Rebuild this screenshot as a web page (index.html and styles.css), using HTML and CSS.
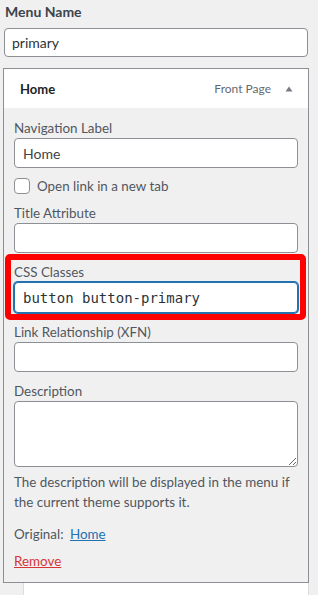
FILE: index.html
```html
<!DOCTYPE html>
<html>
<head>
<meta charset="utf-8">
<link rel="stylesheet" href="styles.css">
</head>
<body>
<div class="page">
  <label class="menu-name-label">Menu Name</label>
  <input class="text-input menu-name" type="text" value="primary">
  <div class="item">
    <div class="item-head">
      <span class="item-title">Home</span>
      <span class="item-type">Front Page</span>
      <svg class="toggle" width="8" height="6" viewBox="0 0 8 6"><path d="M4 0.5 L7.5 5.5 L0.5 5.5 Z" fill="#787c82"/></svg>
    </div>
    <div class="item-body">
      <div class="field">
        <label class="field-label">Navigation Label</label>
        <input class="text-input" type="text" value="Home">
      </div>
      <div class="field check-row">
        <span class="checkbox"></span>
        <span class="check-text">Open link in a new tab</span>
      </div>
      <div class="field">
        <label class="field-label">Title Attribute</label>
        <input class="text-input" type="text" value="">
      </div>
      <div class="field highlighted">
        <label class="field-label">CSS Classes</label>
        <input class="text-input mono focused" type="text" value="button button-primary">
      </div>
      <div class="field">
        <label class="field-label">Link Relationship (XFN)</label>
        <input class="text-input" type="text" value="">
      </div>
      <div class="field desc">
        <label class="field-label">Description</label>
        <textarea class="textarea"></textarea>
        <p class="help">The description will be displayed in the menu if the current theme supports it.</p>
      </div>
      <p class="original">Original: <a href="#" class="link">Home</a></p>
      <p class="remove-row"><a href="#" class="remove">Remove</a></p>
    </div>
  </div>
  <div class="next-item"></div>
</div>
</body>
</html>
```
FILE: styles.css
```css
* { box-sizing: border-box; }
html, body { margin: 0; padding: 0; background: #f0f0f1; }
body {
  font-family: Lato, "Noto Sans", sans-serif;
  font-size: 13.4px;
  color: #50575e;
  width: 318px;
  height: 595px;
  overflow: hidden;
}
.page { padding: 3px 9px 0 3px; }
.menu-name-label {
  display: block;
  font-weight: 700;
  font-size: 14px;
  line-height: 18px;
  color: #3c434a;
  padding-left: 2px;
}
.text-input {
  display: block;
  width: 100%;
  height: 30px;
  border: 1px solid #8c8f94;
  border-radius: 4px;
  background: #fff;
  font-family: inherit;
  font-size: 14px;
  color: #3c434a;
  padding: 0 8px;
  margin: 0;
  outline: none;
}
.menu-name { margin: 7px 0 0 1px; width: 304px; height: 29px; padding: 0 7px; color: #2c3338; }
.item {
  margin-top: 11px;
  border: 1px solid #8c8f94;
  background: #f0f0f1;
  width: 306px;
}
.item-head {
  height: 39px;
  background: #fff;
  display: flex;
  align-items: center;
  padding: 0 15px 0 16px;
}
.item-title { font-weight: 700; color: #1d2327; font-size: 13px; flex: 1; }
.item-type { color: #646970; font-size: 12px; margin-right: 14px; }
.toggle { display: block; }
.item-body { padding: 11px 10px 11px 10px; }
.field { margin-bottom: 10px; position: relative; }
.field-label { display: block; line-height: 18px; margin-bottom: 1px; }
.check-row { display: flex; align-items: center; height: 16px; }
.checkbox {
  width: 16px; height: 16px;
  border: 1px solid #8c8f94;
  border-radius: 4px;
  background: #fff;
  margin-right: 7px;
}
.check-text { line-height: 16px; }
.mono {
  font-family: "DejaVu Sans Mono", monospace;
  font-size: 14px;
  height: 31px;
  color: #2c3338;
}
.focused { border-color: #2271b1; box-shadow: 0 0 0 1px #2271b1; }
.highlighted::before {
  content: "";
  position: absolute;
  left: -9px; right: -8px; top: -9px; bottom: -7px;
  border: 6px solid #ff0000;
  border-radius: 5px;
  pointer-events: none;
}
.textarea {
  display: block;
  width: 100%;
  height: 66px;
  border: 1px solid #8c8f94;
  border-radius: 4px;
  background: #fff;
  margin: 0;
  resize: both;
}
.desc { margin-bottom: 0; }
.help { margin: 5px 0 0; line-height: 20px; }
.original { margin: 12px 0 0; line-height: 20px; }
.link { color: #2271b1; margin-left: 3px; }
.remove-row { margin: 7px 0 0; line-height: 20px; }
.remove { color: #d63638; }
.next-item {
  margin-left: 20px;
  width: 286px;
  height: 20px;
  background: #fff;
  border-left: 1px solid #dcdcde;
  border-right: 1px solid #dcdcde;
}
```
